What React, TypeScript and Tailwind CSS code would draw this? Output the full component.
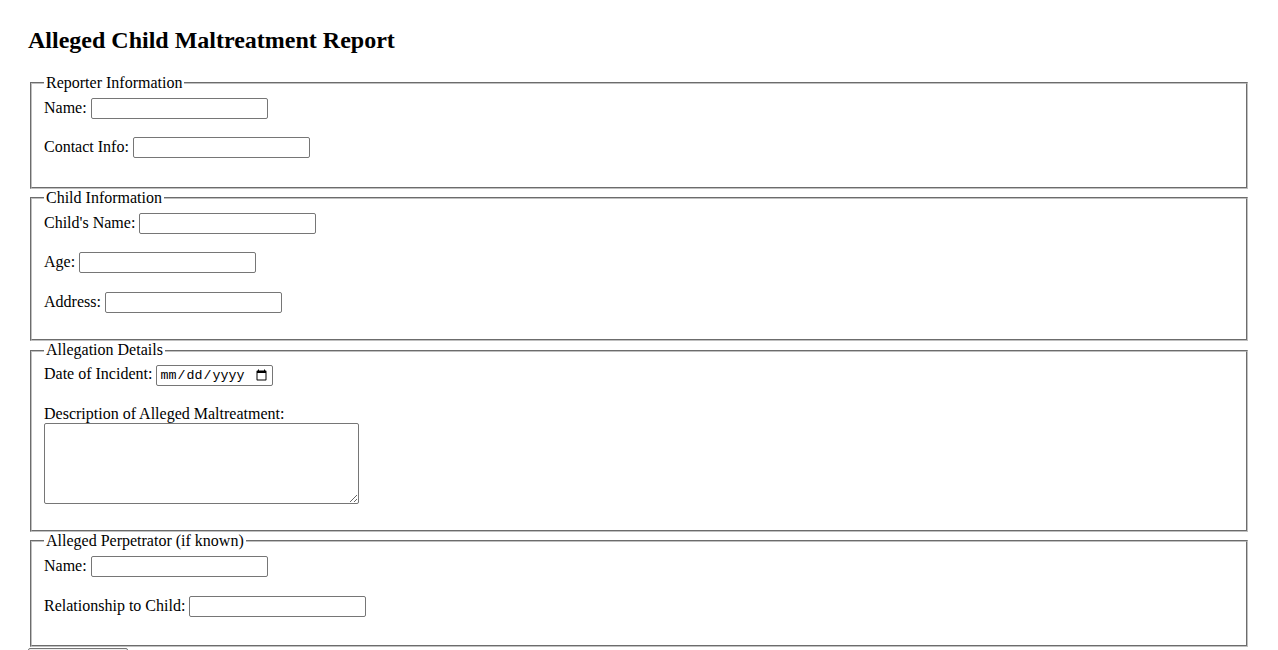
import React from "react";

const inputCls =
  "ml-[4px] w-[177px] h-[21px] border border-[#767676] rounded-[2px] px-[2px] py-[1px] bg-white font-['Liberation_Sans',Arial,sans-serif] text-[13.333px] leading-[normal] text-black";

function Row({ label, last, type = "text" }: { label: string; last?: string; type?: string }) {
  return (
    <div className={`flex items-baseline ${last ?? "mb-[18.4px]"}`}>
      <label className="leading-[18.4px]">{label}</label>
      {type === "date" ? (
        <input
          type="date"
          className="ml-[4px] w-[117px] h-[21px] border border-[#767676] rounded-[2px] px-[2px] py-[1px] bg-white font-['Liberation_Mono',monospace] text-[13.333px] leading-[normal] text-black"
        />
      ) : (
        <input type="text" className={inputCls} />
      )}
    </div>
  );
}

function Fieldset({ legend, children }: { legend: string; children: React.ReactNode }) {
  return (
    <fieldset className="mx-[2px] min-w-0 border-2 [--tw-border-style:groove] [border-style:groove] border-[#c0c0c0] pt-[5.6px] px-[12px] pb-[10px]">
      <legend className="px-[2px] leading-[18.4px]">{legend}</legend>
      {children}
    </fieldset>
  );
}

export default function App() {
  return (
    <div className="min-h-screen bg-white text-black font-['Liberation_Serif','Times_New_Roman',serif] text-[16px] leading-[18.4px] px-[28px] pt-[26.5px]">
      <h2 className="text-[24px] font-bold leading-[27.6px] mb-[20px]">Alleged Child Maltreatment Report</h2>
      <form>
        <Fieldset legend="Reporter Information">
          <Row label="Name:" />
          <Row label="Contact Info:" />
        </Fieldset>
        <Fieldset legend="Child Information">
          <Row label="Child's Name:" />
          <Row label="Age:" />
          <Row label="Address:" last="mb-[16.7px]" />
        </Fieldset>
        <Fieldset legend="Allegation Details">
          <Row label="Date of Incident:" type="date" />
          <div className="leading-[18.4px]">
            <label>Description of Alleged Maltreatment:</label>
          </div>
          <textarea className="block w-[315px] h-[81px] border border-[#767676] rounded-[2px] px-[2px] py-[2px] bg-white font-['Liberation_Mono',monospace] text-[13.333px] resize mb-[16px]" />
        </Fieldset>
        <Fieldset legend="Alleged Perpetrator (if known)">
          <Row label="Name:" />
          <Row label="Relationship to Child:" />
        </Fieldset>
        <button
          type="submit"
          className="mt-[1px] w-[100px] h-[21px] border border-[#767676] rounded-[2px] bg-[#efefef] px-[6px] py-[1px] font-['Liberation_Sans',Arial,sans-serif] text-[13.333px] leading-[normal] text-black"
        >
          Submit Report
        </button>
      </form>
    </div>
  );
}
